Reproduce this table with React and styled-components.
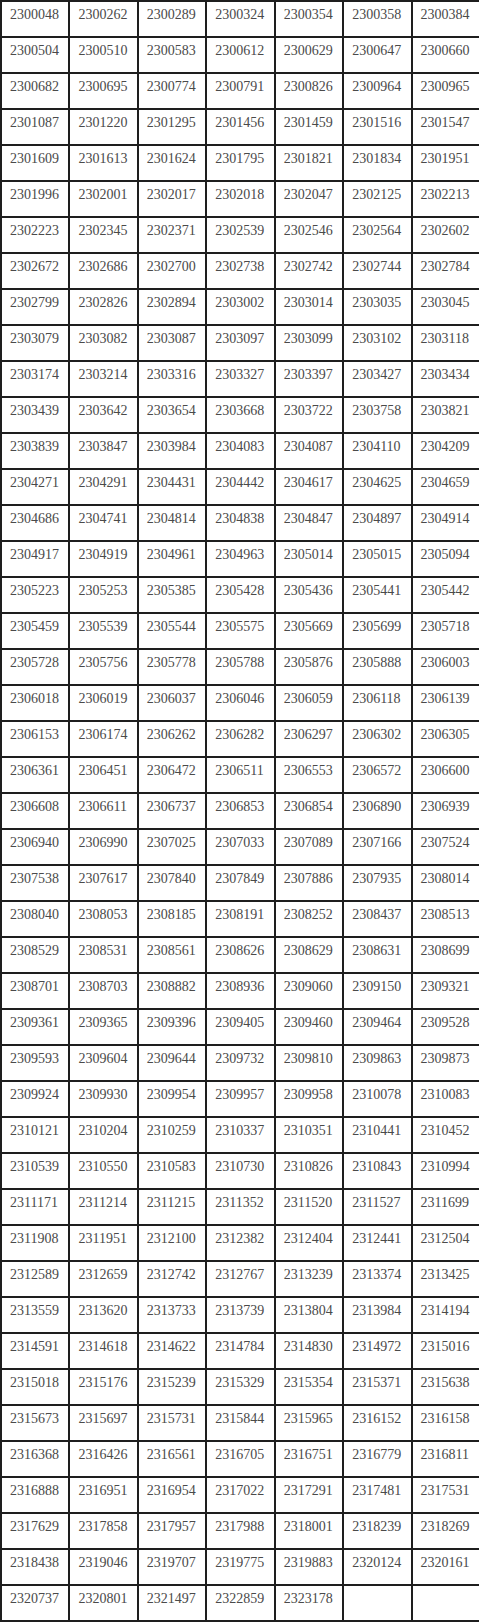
import React from 'react'
import styled, { createGlobalStyle } from 'styled-components'

const GlobalStyle = createGlobalStyle`
  body {
    margin: 0;
    background: #fff;
    overflow: hidden;
  }
`

const Sheet = styled.div`
  display: grid;
  grid-template-columns: repeat(7, 1fr);
  width: 481px;
  border-top: 2px solid #1e1e1e;
  border-left: 2px solid #1e1e1e;
  box-sizing: border-box;
  font-family: "Liberation Serif", "DejaVu Serif", serif;
`

const Cell = styled.div`
  height: 29px;
  padding: 5px 0 0 8px;
  border-right: 2px solid #1e1e1e;
  border-bottom: 2px solid #1e1e1e;
  font-size: 14px;
  line-height: 16px;
  color: #4a4a4a;
  white-space: nowrap;
`

const numbers = `
2300048 2300262 2300289 2300324 2300354 2300358 2300384
2300504 2300510 2300583 2300612 2300629 2300647 2300660
2300682 2300695 2300774 2300791 2300826 2300964 2300965
2301087 2301220 2301295 2301456 2301459 2301516 2301547
2301609 2301613 2301624 2301795 2301821 2301834 2301951
2301996 2302001 2302017 2302018 2302047 2302125 2302213
2302223 2302345 2302371 2302539 2302546 2302564 2302602
2302672 2302686 2302700 2302738 2302742 2302744 2302784
2302799 2302826 2302894 2303002 2303014 2303035 2303045
2303079 2303082 2303087 2303097 2303099 2303102 2303118
2303174 2303214 2303316 2303327 2303397 2303427 2303434
2303439 2303642 2303654 2303668 2303722 2303758 2303821
2303839 2303847 2303984 2304083 2304087 2304110 2304209
2304271 2304291 2304431 2304442 2304617 2304625 2304659
2304686 2304741 2304814 2304838 2304847 2304897 2304914
2304917 2304919 2304961 2304963 2305014 2305015 2305094
2305223 2305253 2305385 2305428 2305436 2305441 2305442
2305459 2305539 2305544 2305575 2305669 2305699 2305718
2305728 2305756 2305778 2305788 2305876 2305888 2306003
2306018 2306019 2306037 2306046 2306059 2306118 2306139
2306153 2306174 2306262 2306282 2306297 2306302 2306305
2306361 2306451 2306472 2306511 2306553 2306572 2306600
2306608 2306611 2306737 2306853 2306854 2306890 2306939
2306940 2306990 2307025 2307033 2307089 2307166 2307524
2307538 2307617 2307840 2307849 2307886 2307935 2308014
2308040 2308053 2308185 2308191 2308252 2308437 2308513
2308529 2308531 2308561 2308626 2308629 2308631 2308699
2308701 2308703 2308882 2308936 2309060 2309150 2309321
2309361 2309365 2309396 2309405 2309460 2309464 2309528
2309593 2309604 2309644 2309732 2309810 2309863 2309873
2309924 2309930 2309954 2309957 2309958 2310078 2310083
2310121 2310204 2310259 2310337 2310351 2310441 2310452
2310539 2310550 2310583 2310730 2310826 2310843 2310994
2311171 2311214 2311215 2311352 2311520 2311527 2311699
2311908 2311951 2312100 2312382 2312404 2312441 2312504
2312589 2312659 2312742 2312767 2313239 2313374 2313425
2313559 2313620 2313733 2313739 2313804 2313984 2314194
2314591 2314618 2314622 2314784 2314830 2314972 2315016
2315018 2315176 2315239 2315329 2315354 2315371 2315638
2315673 2315697 2315731 2315844 2315965 2316152 2316158
2316368 2316426 2316561 2316705 2316751 2316779 2316811
2316888 2316951 2316954 2317022 2317291 2317481 2317531
2317629 2317858 2317957 2317988 2318001 2318239 2318269
2318438 2319046 2319707 2319775 2319883 2320124 2320161
2320737 2320801 2321497 2322859 2323178
`.trim().split(/\s+/)

// pad the last row out to 7 cells
const cells = [...numbers]
while (cells.length % 7) cells.push('')

const App = () => (
  <>
    <GlobalStyle />
    <Sheet>
      {cells.map((n, i) => (
        <Cell key={i}>{n}</Cell>
      ))}
    </Sheet>
  </>
)

export default App
